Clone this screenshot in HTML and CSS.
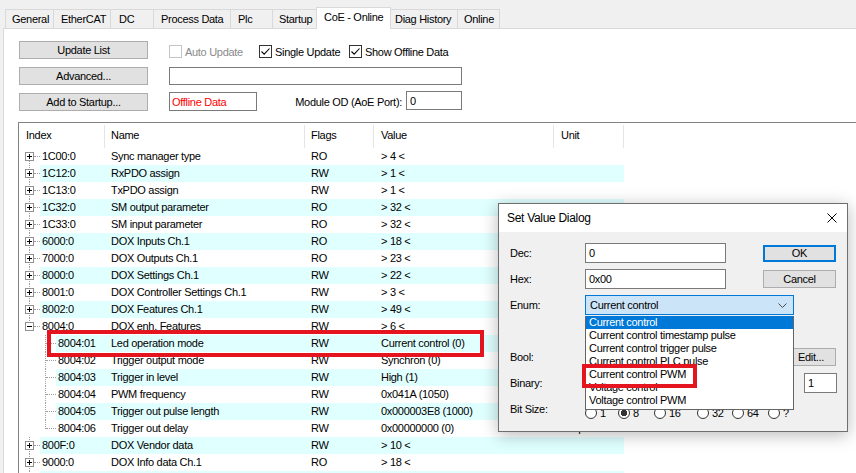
FILE: index.html
```html
<!DOCTYPE html>
<html>
<head>
<meta charset="utf-8">
<title>CoE - Online</title>
<link rel="stylesheet" href="styles.css">
</head>
<body>
<div class="tabs">
  <div class="tab tab-general">General</div>
  <div class="tab tab-ethercat">EtherCAT</div>
  <div class="tab tab-dc">DC</div>
  <div class="tab tab-pdo">Process Data</div>
  <div class="tab tab-plc">Plc</div>
  <div class="tab tab-startup">Startup</div>
  <div class="tab tab-coe active">CoE - Online</div>
  <div class="tab tab-diag">Diag History</div>
  <div class="tab tab-online">Online</div>
</div>
<div class="panel">
  <div class="controls">
    <button class="btn">Update List</button>
    <div class="checks">
      <span class="chk chk-auto disabled"><i class="cbox"></i>Auto Update</span>
      <span class="chk chk-single"><i class="cbox"><svg viewBox="0 0 11 11" width="11" height="11"><path d="M1.5 5.5 L4.2 8.2 L9.5 2.5" fill="none" stroke="#000" stroke-width="1.1"/></svg></i>Single Update</span>
      <span class="chk"><i class="cbox"><svg viewBox="0 0 11 11" width="11" height="11"><path d="M1.5 5.5 L4.2 8.2 L9.5 2.5" fill="none" stroke="#000" stroke-width="1.1"/></svg></i>Show Offline Data</span>
    </div>
    <button class="btn">Advanced...</button>
    <div class="textbox wide"></div>
    <button class="btn">Add to Startup...</button>
    <div class="row3">
      <div class="textbox offline">Offline Data</div>
      <span class="modlabel">Module OD (AoE Port):</span>
      <div class="textbox port">0</div>
    </div>
  </div>

  <div class="table">
    <div class="thead">
      <span>Index</span><span class="pn">Name</span><span class="pn">Flags</span><span>Value</span><span>Unit</span>
    </div>

    <div class="row first"><div class="tree"><i class="box plus"></i><i class="dots"></i></div><div class="cells"><span>1C00:0</span><span>Sync manager type</span><span>RO</span><span>&gt; 4 &lt;</span><span></span></div></div>
    <div class="row alt"><div class="tree"><i class="box plus"></i><i class="dots"></i></div><div class="cells"><span>1C12:0</span><span>RxPDO assign</span><span>RW</span><span>&gt; 1 &lt;</span><span></span></div></div>
    <div class="row"><div class="tree"><i class="box plus"></i><i class="dots"></i></div><div class="cells"><span>1C13:0</span><span>TxPDO assign</span><span>RW</span><span>&gt; 1 &lt;</span><span></span></div></div>
    <div class="row alt"><div class="tree"><i class="box plus"></i><i class="dots"></i></div><div class="cells"><span>1C32:0</span><span>SM output parameter</span><span>RO</span><span>&gt; 32 &lt;</span><span></span></div></div>
    <div class="row"><div class="tree"><i class="box plus"></i><i class="dots"></i></div><div class="cells"><span>1C33:0</span><span>SM input parameter</span><span>RO</span><span>&gt; 32 &lt;</span><span></span></div></div>
    <div class="row alt"><div class="tree"><i class="box plus"></i><i class="dots"></i></div><div class="cells"><span>6000:0</span><span>DOX Inputs Ch.1</span><span>RO</span><span>&gt; 18 &lt;</span><span></span></div></div>
    <div class="row"><div class="tree"><i class="box plus"></i><i class="dots"></i></div><div class="cells"><span>7000:0</span><span>DOX Outputs Ch.1</span><span>RO</span><span>&gt; 23 &lt;</span><span></span></div></div>
    <div class="row alt"><div class="tree"><i class="box plus"></i><i class="dots"></i></div><div class="cells"><span>8000:0</span><span>DOX Settings Ch.1</span><span>RW</span><span>&gt; 22 &lt;</span><span></span></div></div>
    <div class="row"><div class="tree"><i class="box plus"></i><i class="dots"></i></div><div class="cells"><span>8001:0</span><span>DOX Controller Settings Ch.1</span><span>RW</span><span>&gt; 3 &lt;</span><span></span></div></div>
    <div class="row alt"><div class="tree"><i class="box plus"></i><i class="dots"></i></div><div class="cells"><span>8002:0</span><span>DOX Features Ch.1</span><span>RW</span><span>&gt; 49 &lt;</span><span></span></div></div>
    <div class="row"><div class="tree open"><i class="box minus"></i><i class="dots"></i></div><div class="cells"><span>8004:0</span><span>DOX enh. Features</span><span>RW</span><span>&gt; 6 &lt;</span><span></span></div></div>
    <div class="row alt marked"><div class="tree child"><i class="dots"></i></div><div class="cells"><span>8004:01</span><span>Led operation mode</span><span>RW</span><span>Current control (0)</span><span></span></div><div class="mark row-mark"></div></div>
    <div class="row"><div class="tree child"><i class="dots"></i></div><div class="cells"><span>8004:02</span><span>Trigger output mode</span><span>RW</span><span>Synchron (0)</span><span></span></div></div>
    <div class="row alt"><div class="tree child"><i class="dots"></i></div><div class="cells"><span>8004:03</span><span>Trigger in level</span><span>RW</span><span>High (1)</span><span></span></div></div>
    <div class="row"><div class="tree child"><i class="dots"></i></div><div class="cells"><span>8004:04</span><span>PWM frequency</span><span>RW</span><span>0x041A (1050)</span><span>Hz</span></div></div>
    <div class="row alt"><div class="tree child"><i class="dots"></i></div><div class="cells"><span>8004:05</span><span>Trigger out pulse length</span><span>RW</span><span>0x000003E8 (1000)</span><span>0.1 µs</span></div></div>
    <div class="row"><div class="tree child last"><i class="dots"></i></div><div class="cells"><span>8004:06</span><span>Trigger out delay</span><span>RW</span><span>0x00000000 (0)</span><span>0.1 µs</span></div></div>
    <div class="row alt"><div class="tree"><i class="box plus"></i><i class="dots"></i></div><div class="cells"><span>800F:0</span><span>DOX Vendor data</span><span>RW</span><span>&gt; 10 &lt;</span><span></span></div></div>
    <div class="row"><div class="tree"><i class="box plus"></i><i class="dots"></i></div><div class="cells"><span>9000:0</span><span>DOX Info data Ch.1</span><span>RO</span><span>&gt; 18 &lt;</span><span></span></div></div>
    <div class="row alt"><div class="tree"></div><div class="cells"><span></span><span></span><span></span><span></span><span></span></div></div>
  </div>
</div>

<div class="dialog">
  <div class="titlebar">
    <span class="title">Set Value Dialog</span>
    <svg class="close" viewBox="0 0 10 10" width="10" height="10"><path d="M0.5 0.5 L9.5 9.5 M9.5 0.5 L0.5 9.5" stroke="#000" stroke-width="1" fill="none"/></svg>
  </div>
  <div class="dbody">
    <label class="lbl">Dec:</label>
    <div class="field short">0</div>
    <button class="dbtn ok">OK</button>

    <label class="lbl">Hex:</label>
    <div class="field short">0x00</div>
    <button class="dbtn cancel">Cancel</button>

    <label class="lbl">Enum:</label>
    <div class="combo">Current control<svg class="chev" viewBox="0 0 9 5" width="9" height="5"><path d="M0.5 0.5 L4.5 4.5 L8.5 0.5" fill="none" stroke="#4a4a4a" stroke-width="1"/></svg></div>

    <span class="spacer"></span>

    <label class="lbl">Bool:</label>
    <button class="dbtn edit">Edit...</button>

    <label class="lbl">Binary:</label>
    <div class="field bin">1</div>

    <label class="lbl">Bit Size:</label>
    <div class="radios">
      <span class="radio"><i></i>1</span>
      <span class="radio on"><i></i>8</span>
      <span class="radio"><i></i>16</span>
      <span class="radio"><i></i>32</span>
      <span class="radio"><i></i>64</span>
      <span class="radio"><i></i>?</span>
    </div>
  </div>
  <div class="droplist">
    <div class="item sel">Current control</div>
    <div class="item">Current control timestamp pulse</div>
    <div class="item">Current control trigger pulse</div>
    <div class="item">Current control PLC pulse</div>
    <div class="item">Current control PWM</div>
    <div class="item">Voltage control</div>
    <div class="item">Voltage control PWM</div>
    <div class="mark list-mark"></div>
  </div>
</div>
</body>
</html>
```

FILE: styles.css
```css
* { box-sizing: border-box; }
html, body { margin: 0; padding: 0; }
body {
  width: 856px;
  height: 473px;
  overflow: hidden;
  position: relative;
  background: #f0f0f0;
  font-family: "Liberation Sans", Arial, sans-serif;
  font-size: 11px;
  letter-spacing: -0.3px;
  color: #000;
}
button { font: inherit; letter-spacing: inherit; color: inherit; margin: 0; }

/* ---------- tabs ---------- */
.tabs {
  display: flex;
  align-items: flex-end;
  height: 21px;
  margin-top: 7px;
  padding-left: 5px;
}
.tab {
  height: 19px;
  line-height: 18px;
  padding-left: 6px;
  border: 1px solid #d9d9d9;
  border-bottom: none;
  border-right: none;
  background: #f0f0f0;
  white-space: nowrap;
}
.tab:last-child { border-right: 1px solid #d9d9d9; }
.tab.active {
  height: 22px;
  margin-bottom: -1px;
  background: #fff;
  border-right: 1px solid #d9d9d9;
  position: relative;
  z-index: 1;
}
.tab-general { width: 48px; }
.tab-ethercat { width: 57px; padding-left: 7px; }
.tab-dc { width: 43px; padding-left: 8px; }
.tab-pdo { width: 77px; padding-left: 7px; }
.tab-plc { width: 42px; padding-left: 7px; }
.tab-startup { width: 44px; }
.tab-coe { width: 75px; padding-left: 7px; }
.tab-diag { width: 66px; padding-left: 4px; border-left: none; }
.tab-online { width: 43px; }

/* ---------- panel ---------- */
.panel {
  margin-left: 3px;
  width: 900px;
  height: 445px;
  background: #fff;
  border-top: 1px solid #d9d9d9;
  border-left: 1px solid #d9d9d9;
}
.controls {
  display: grid;
  grid-template-columns: 129px 293px;
  grid-template-rows: 18px 18px 18px;
  column-gap: 21px;
  row-gap: 8px;
  padding: 12px 0 0 15px;
}
.btn {
  height: 18px;
  padding: 0;
  background: #e1e1e1;
  border: 1px solid #adadad;
  text-align: center;
}
.checks {
  display: flex;
  align-items: center;
  padding-top: 3px;
}
.chk { display: flex; align-items: center; white-space: nowrap; }
.chk-auto, .chk-single { width: 90px; }
.cbox {
  width: 13px;
  height: 13px;
  margin-right: 3px;
  border: 1px solid #333;
  background: #fff;
  display: flex;
  align-items: center;
  justify-content: center;
}
.chk.disabled { color: #8a8a8a; }
.chk.disabled .cbox { border-color: #c4c4c4; }
.textbox {
  border: 1px solid #7a7a7a;
  background: #fff;
  height: 18px;
  line-height: 16px;
  white-space: nowrap;
}
.row3 {
  display: flex;
  align-items: flex-start;
}
.offline {
  width: 88px;
  height: 19px;
  margin-top: -1px;
  padding-left: 2px;
  color: #ff0000;
  line-height: 18px;
}
.modlabel {
  margin-left: auto;
  margin-right: 4px;
  line-height: 18px;
}
.port {
  width: 56px;
  height: 19px;
  margin-top: -2px;
  padding-left: 3px;
  line-height: 18px;
}

/* ---------- table ---------- */
.table {
  margin: 11px 0 0 14px;
  border-top: 1px solid #828282;
  border-left: 1px solid #828282;
  background: #fff;
  height: 360px;
}
.thead {
  display: grid;
  grid-template-columns: 86px 200px 69px 180px 70px;
  height: 25px;
  line-height: 25px;
}
.thead span {
  padding-left: 7px;
  background: linear-gradient(#e5e5e5, #e5e5e5) right 2px / 1px calc(100% - 2px) no-repeat;
}
.thead span.pn { padding-left: 6px; }
.row {
  display: flex;
  width: 605px;
  height: 17px;
  line-height: 17px;
}
.row.marked { position: relative; }
.tree {
  width: 21px;
  flex: none;
  display: flex;
  align-items: center;
  padding-left: 6px;
  background: repeating-linear-gradient(to bottom, #a0a0a0 0 1px, transparent 1px 2px) 10px 0 / 1px 100% no-repeat;
}
.row.first .tree {
  background: repeating-linear-gradient(to bottom, #a0a0a0 0 1px, transparent 1px 2px) 10px 9px / 1px 8px no-repeat;
}
.box {
  width: 9px;
  height: 9px;
  flex: none;
  border: 1px solid #919191;
  background: #fff;
}
.box.plus {
  background:
    linear-gradient(#000, #000) center / 5px 1px no-repeat,
    linear-gradient(#000, #000) center / 1px 5px no-repeat,
    #fff;
}
.box.minus {
  background: linear-gradient(#000, #000) center / 5px 1px no-repeat, #fff;
}
.dots {
  width: 6px;
  height: 0;
  border-top: 1px dotted #a0a0a0;
}
.tree.child {
  width: 37px;
  padding-left: 27px;
  background: repeating-linear-gradient(to bottom, #a0a0a0 0 1px, transparent 1px 2px) 26px 0 / 1px 100% no-repeat;
}
.tree.child.last {
  background: repeating-linear-gradient(to bottom, #a0a0a0 0 1px, transparent 1px 2px) 26px 0 / 1px 9px no-repeat;
}
.tree.child .dots { width: 10px; }
.tree.open {
  background:
    repeating-linear-gradient(to bottom, #a0a0a0 0 1px, transparent 1px 2px) 10px 0 / 1px 4px no-repeat,
    repeating-linear-gradient(to bottom, #a0a0a0 0 1px, transparent 1px 2px) 26px 9px / 1px 8px no-repeat;
}
.cells {
  flex: 1;
  display: grid;
  grid-template-columns: 1fr 200px 69px 180px 70px;
  white-space: nowrap;
}
.cells span { padding-left: 6px; overflow: hidden; }
.cells span:first-child { padding-left: 2px; }
.cells span:nth-child(4), .cells span:nth-child(5) { padding-left: 7px; }
.row.alt .cells { background: #e0ffff; }

.mark {
  position: absolute;
  border: 4px solid #e4151f;
  pointer-events: none;
}
.row-mark {
  left: 28px;
  top: -5px;
  width: 437px;
  height: 27px;
}

/* ---------- dialog ---------- */
.dialog {
  position: absolute;
  left: 498px;
  top: 203px;
  width: 350px;
  height: 229px;
  border: 1px solid #6e6e6e;
  background: #f0f0f0;
  box-shadow: 0 3px 16px rgba(0, 0, 0, 0.28);
  z-index: 5;
}
.titlebar {
  height: 28px;
  background: #fff;
  display: flex;
  align-items: center;
  justify-content: space-between;
  padding: 0 10px 0 8px;
}
.title { font-size: 12px; }
.close { display: block; }
.dbody {
  display: grid;
  grid-template-columns: 75px 178px 73px;
  grid-template-rows: repeat(7, 20px);
  row-gap: 6px;
  align-items: center;
  padding: 11px 0 0 11px;
}
.lbl { grid-column: 1; white-space: nowrap; }
.field {
  height: 20px;
  line-height: 18px;
  border: 1px solid #7a7a7a;
  background: #fff;
  padding-left: 3px;
}
.field.short { width: 141px; }
.dbtn {
  height: 18px;
  padding: 0;
  background: #e1e1e1;
  border: 1px solid #adadad;
  text-align: center;
}
.dbtn.ok {
  height: 17px;
  border: 2px solid #0078d7;
}
.dbtn.edit {
  grid-column: 3;
  width: 50px;
  justify-self: end;
}
.field.bin {
  grid-column: 3;
  width: 33px;
  justify-self: end;
  margin-right: -1px;
  line-height: 18px;
}
.combo {
  grid-column: 2 / 4;
  width: 209px;
  height: 20px;
  border: 1px solid #0078d7;
  background: #cce4f7;
  padding: 0 0 0 4px;
  line-height: 18px;
  display: flex;
  align-items: center;
  justify-content: space-between;
}
.chev { margin-right: 6px; display: block; }
.spacer { grid-column: 1 / -1; }
.radios {
  grid-column: 2 / 4;
  display: grid;
  grid-template-columns: 33px 36px 43px 35px 36px auto;
  align-self: end;
  margin-bottom: 0;
  height: 12px;
  line-height: 12px;
}
.radio { display: flex; align-items: center; }
.radio i {
  width: 12px;
  height: 12px;
  margin-right: 3px;
  border: 1px solid #333;
  border-radius: 50%;
  background: #fff;
  flex: none;
}
.radio.on i {
  background: radial-gradient(circle, #333 0 3px, #fff 3.5px);
}
.droplist {
  position: absolute;
  left: 86px;
  top: 112px;
  width: 209px;
  height: 94px;
  border: 1px solid #646464;
  border-top: none;
  background: #fff;
  white-space: nowrap;
}
.item {
  height: 13px;
  line-height: 13px;
  padding-left: 3px;
}
.item.sel { background: #0078d7; color: #fff; }
.list-mark {
  left: -4px;
  top: 48px;
  width: 115px;
  height: 24px;
}
```
